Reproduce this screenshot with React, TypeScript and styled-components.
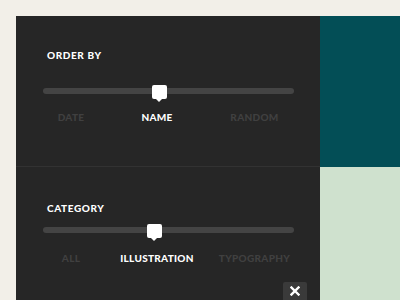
import React from 'react';
import styled, { createGlobalStyle } from 'styled-components';

const GlobalStyle = createGlobalStyle`
  html, body {
    margin: 0;
    padding: 0;
    background: #f2efe8;
    overflow: hidden;
  }
`;

type Filter = {
  title: string;
  options: string[];
  active: number;
  thumb: number;
  titleTop: number;
  trackTop: number;
  labelsTop: number;
};

const filters: Filter[] = [
  { title: 'ORDER BY', options: ['DATE', 'NAME', 'RANDOM'], active: 1, thumb: 109, titleTop: 34, trackTop: 28, labelsTop: 18 },
  { title: 'CATEGORY', options: ['ALL', 'ILLUSTRATION', 'TYPOGRAPHY'], active: 1, thumb: 104, titleTop: 36, trackTop: 14, labelsTop: 20 },
];

const App: React.FC = () => {
  return (
    <>
      <GlobalStyle />
      <Page>
        <Panel>
          {filters.map((f, i) => (
            <Section key={f.title} $first={i === 0}>
              <Title style={{ marginTop: f.titleTop }}>{f.title}</Title>
              <Track style={{ marginTop: f.trackTop }}>
                <Thumb style={{ left: f.thumb }} />
              </Track>
              <Labels style={{ marginTop: f.labelsTop }}>
                {f.options.map((o, j) => (
                  <Label key={o} $active={j === f.active}>{o}</Label>
                ))}
              </Labels>
            </Section>
          ))}
          <CloseButton aria-label="close">
            <svg width="10" height="10" viewBox="0 0 10 10">
              <path d="M1.5 1.5L8.5 8.5M8.5 1.5L1.5 8.5" stroke="#fff" strokeWidth="2.4" strokeLinecap="square" />
            </svg>
          </CloseButton>
        </Panel>
        <Side>
          <Teal />
          <Mint />
        </Side>
      </Page>
    </>
  );
};

export default App;

const Page = styled.div`
  display: flex;
  width: 400px;
  height: 300px;
  padding: 16px 0 0 16px;
  box-sizing: border-box;
  font-family: 'Lato', 'DejaVu Sans', sans-serif;
`;

const Panel = styled.div`
  position: relative;
  width: 304px;
  background: #262626;
  display: flex;
  flex-direction: column;
`;

const Section = styled.div<{ $first?: boolean }>`
  height: ${(p) => (p.$first ? '150px' : 'auto')};
  flex: ${(p) => (p.$first ? 'none' : '1')};
  padding: 0 26px 0 27px;
  border-bottom: ${(p) => (p.$first ? '1px solid #323232' : 'none')};
  display: flex;
  flex-direction: column;
`;

const Title = styled.div`
  margin-left: 4px;
  font-size: 10px;
  font-weight: 900;
  letter-spacing: 0.6px;
  line-height: 10px;
  color: #fff;
`;

const Track = styled.div`
  position: relative;
  height: 6px;
  border-radius: 3px;
  background: #444444;
`;

const Thumb = styled.div`
  position: absolute;
  top: -3px;
  width: 15px;
  height: 14px;
  border-radius: 2px;
  background: #fff;
  &::after {
    content: '';
    position: absolute;
    left: 4px;
    bottom: -3px;
    border-left: 3.5px solid transparent;
    border-right: 3.5px solid transparent;
    border-top: 3px solid #fff;
  }
`;

const Labels = styled.div`
  display: grid;
  grid-template-columns: 56px 116px 79px;
`;

const Label = styled.div<{ $active?: boolean }>`
  text-align: center;
  font-size: 10px;
  font-weight: 900;
  letter-spacing: 0.3px;
  line-height: 10px;
  color: ${(p) => (p.$active ? '#ffffff' : '#404040')};
`;

const CloseButton = styled.div`
  position: absolute;
  right: 13px;
  bottom: -4px;
  width: 24px;
  height: 22px;
  border-radius: 2px;
  background: #3a3a3a;
  display: flex;
  align-items: center;
  justify-content: center;
  padding-bottom: 4px;
  box-sizing: border-box;
`;

const Side = styled.div`
  flex: 1;
  display: flex;
  flex-direction: column;
`;

const Teal = styled.div`
  height: 151px;
  background: #034e56;
`;

const Mint = styled.div`
  flex: 1;
  background: #cfe1ce;
`;
